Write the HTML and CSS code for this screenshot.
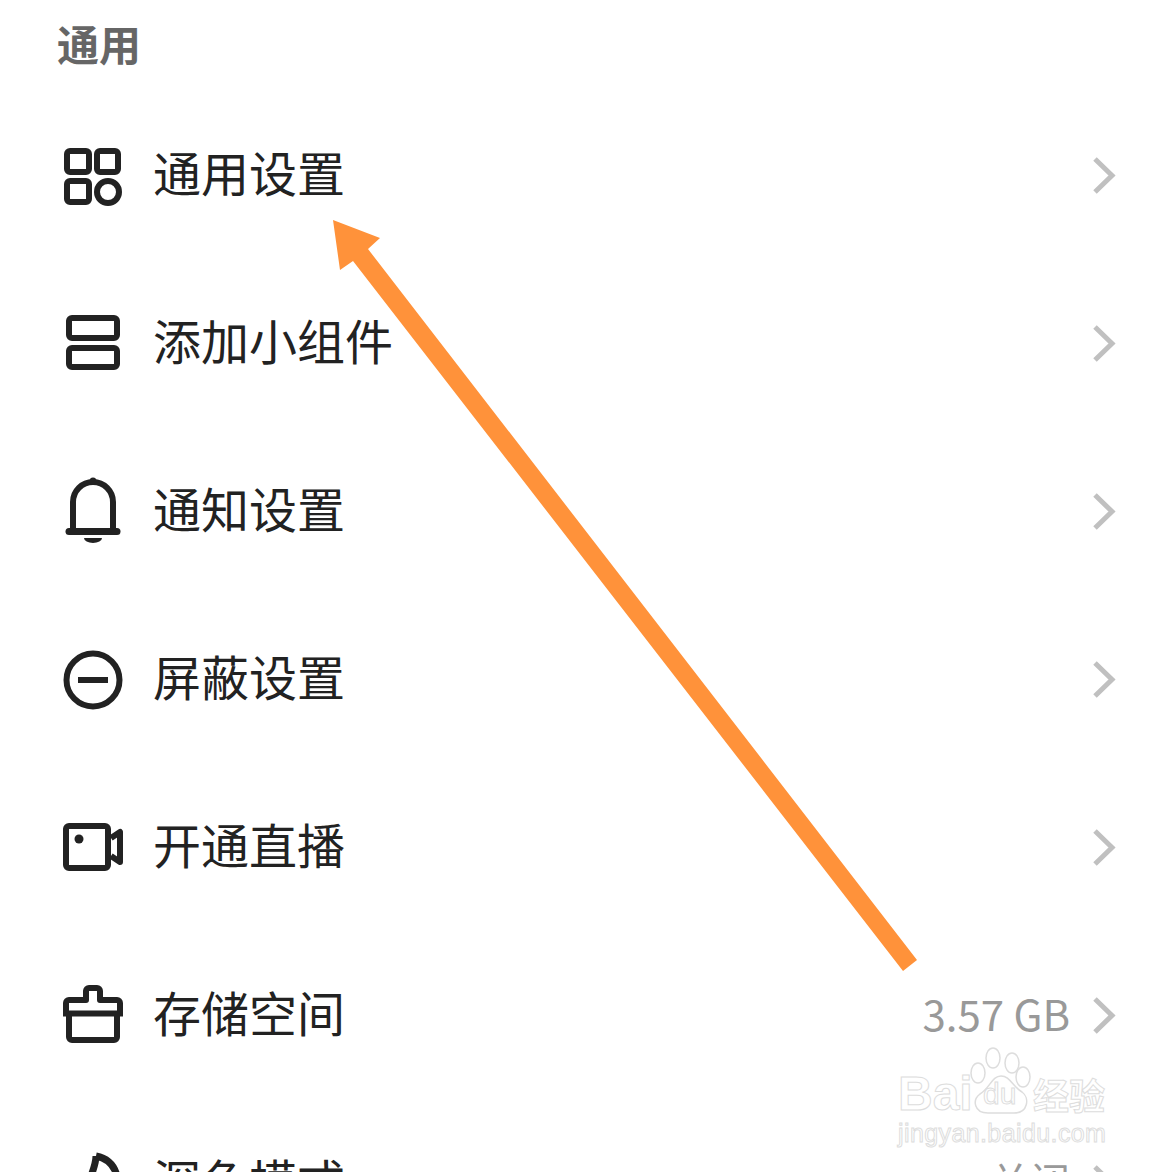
FILE: index.html
```html
<!DOCTYPE html>
<html>
<head>
  <title>通用</title>
  <link rel="stylesheet" href="styles.css">
</head>
<body>
  <div class="page">
    <h1 class="section-title">通用</h1>
    <div class="list">
      <div class="row">
        <svg class="icon" viewBox="0 0 64 64">
          <rect x="7" y="7" width="22" height="21" rx="3"/>
          <rect x="37" y="7" width="21" height="21" rx="3"/>
          <rect x="7" y="37" width="22" height="21" rx="3"/>
          <circle cx="48" cy="48" r="11"/>
        </svg>
        <span class="label">通用设置</span>
        <svg class="chevron" viewBox="0 0 24 40"><path d="M3 3L20 19.500L3 36"/></svg>
      </div>
      <div class="row">
        <svg class="icon" viewBox="0 0 64 64">
          <rect x="9" y="6" width="48" height="20" rx="3"/>
          <rect x="9" y="36" width="48" height="19" rx="3"/>
        </svg>
        <span class="label">添加小组件</span>
        <svg class="chevron" viewBox="0 0 24 40"><path d="M3 3L20 19.500L3 36"/></svg>
      </div>
      <div class="row">
        <svg class="icon" viewBox="0 0 64 64">
          <path d="M13 51V22a20 20 0 0 1 40 0V51"/>
          <path class="round" d="M9 51.500H57"/>
          <circle class="solid" cx="33" cy="1" r="3.500"/>
          <path class="solid" d="M24 58h18a9 5 0 0 1-18 0z"/>
        </svg>
        <span class="label">通知设置</span>
        <svg class="chevron" viewBox="0 0 24 40"><path d="M3 3L20 19.500L3 36"/></svg>
      </div>
      <div class="row">
        <svg class="icon" viewBox="0 0 64 64">
          <circle cx="33" cy="32" r="26.500"/>
          <path d="M18 32H48"/>
        </svg>
        <span class="label">屏蔽设置</span>
        <svg class="chevron" viewBox="0 0 24 40"><path d="M3 3L20 19.500L3 36"/></svg>
      </div>
      <div class="row">
        <svg class="icon" viewBox="0 0 64 64">
          <rect x="6" y="10" width="42" height="42" rx="3"/>
          <circle class="solid" cx="19" cy="23" r="4.500"/>
          <path d="M51 22L60 16V46L51 40"/>
        </svg>
        <span class="label">开通直播</span>
        <svg class="chevron" viewBox="0 0 24 40"><path d="M3 3L20 19.500L3 36"/></svg>
      </div>
      <div class="row">
        <svg class="icon" viewBox="0 0 64 64">
          <path d="M6 32V19a3 3 0 0 1 3-3H26V7a3 3 0 0 1 3-3h8a3 3 0 0 1 3 3V16H57a3 3 0 0 1 3 3V32"/>
          <path d="M3 29.500H63"/>
          <path d="M9 30V53a3 3 0 0 0 3 3H54a3 3 0 0 0 3-3V30"/>
        </svg>
        <span class="label">存储空间</span>
        <span class="value">3.57 GB</span>
        <svg class="chevron" viewBox="0 0 24 40"><path d="M3 3L20 19.500L3 36"/></svg>
      </div>
      <div class="row">
        <svg class="icon" viewBox="0 0 64 64">
          <path class="thick" d="M36 4C46 6 54 12 57 24"/>
          <path class="thick" d="M36 4C36 10 34 16 31 24"/>
        </svg>
        <span class="label">深色模式</span>
        <span class="value value-cn">关闭</span>
        <svg class="chevron" viewBox="0 0 24 40"><path d="M3 3L20 19.500L3 36"/></svg>
      </div>
    </div>

    <svg class="arrow" viewBox="0 0 1172 1172">
      <path d="M333 220L380 238L368 249L917 960L903 971L353 261L340 270z"/>
    </svg>

    <div class="watermark">
      <svg class="paw" viewBox="0 0 70 70">
        <ellipse cx="25" cy="12" rx="7" ry="10"/>
        <ellipse cx="44" cy="17" rx="7" ry="10"/>
        <ellipse cx="10" cy="27" rx="7" ry="10"/>
        <ellipse cx="55" cy="31" rx="7" ry="10"/>
        <path d="M33 30C24 30 22 42 12 48C4 54 6 67 20 67H46C60 67 62 52 54 46C44 40 42 30 33 30z"/>
      </svg>
      <div class="wm-top">
        <span class="wm-bai">Bai</span>
        <span class="wm-du">du</span>
        <span class="wm-cn">经验</span>
      </div>
      <div class="wm-url">jingyan.baidu.com</div>
    </div>
  </div>
</body>
</html>
```

FILE: styles.css
```css
body {
  margin: 0;
  padding: 0;
  background-color: #fff;
  font-family: "Noto Sans CJK SC", "Noto Sans", sans-serif;
}

.page {
  position: relative;
  width: 1172px;
  height: 1172px;
  overflow: hidden;
}

.section-title {
  margin: 0;
  height: 92px;
  padding-left: 57px;
  font-size: 42px;
  line-height: 86px;
  font-weight: 700;
  color: #666;
}

.row {
  display: flex;
  align-items: center;
  height: 168px;
  padding: 0 56px 0 60px;
}

.icon {
  width: 64px;
  height: 64px;
  margin-right: 29px;
  flex-shrink: 0;
  overflow: visible;
  fill: none;
  stroke: #222;
  stroke-width: 6;
  stroke-linejoin: round;
}

.icon .solid {
  fill: #222;
  stroke: none;
}

.icon .round {
  stroke-linecap: round;
  stroke-width: 7;
}

.icon .thick {
  stroke-width: 7;
}

.label {
  flex: 1;
  margin-bottom: 10px;
  font-size: 48px;
  color: #222;
}

.value {
  margin-right: 22px;
  margin-bottom: 8px;
  font-size: 42px;
  color: #999;
}

.value-cn {
  font-size: 40px;
}

.chevron {
  width: 24px;
  height: 40px;
  flex-shrink: 0;
  fill: none;
  stroke: #c0c0c0;
  stroke-width: 5;
}

.arrow {
  position: absolute;
  left: 0;
  top: 0;
  width: 1172px;
  height: 1172px;
  fill: #ff923a;
}

.watermark {
  position: absolute;
  left: 896px;
  top: 1044px;
  width: 216px;
  height: 104px;
  font-family: "Liberation Sans", sans-serif;
  color: #fff;
  -webkit-text-stroke: 1px #ddd;
}

.paw {
  position: absolute;
  left: 72px;
  top: 2px;
  width: 70px;
  height: 70px;
  fill: #fff;
  stroke: #ddd;
  stroke-width: 1.500;
}

.wm-top {
  position: absolute;
  left: 2px;
  top: 23px;
  width: 214px;
  display: flex;
  align-items: center;
  font-size: 48px;
  line-height: 54px;
  font-weight: 700;
}

.wm-bai {
  width: 85px;
}

.wm-du {
  width: 50px;
  font-size: 30px;
  font-weight: 400;
}

.wm-cn {
  font-family: "Noto Sans CJK SC", sans-serif;
  font-size: 36px;
}

.wm-url {
  position: absolute;
  left: 2px;
  top: 74px;
  font-size: 25px;
  line-height: 30px;
  letter-spacing: 0.400px;
}
```
